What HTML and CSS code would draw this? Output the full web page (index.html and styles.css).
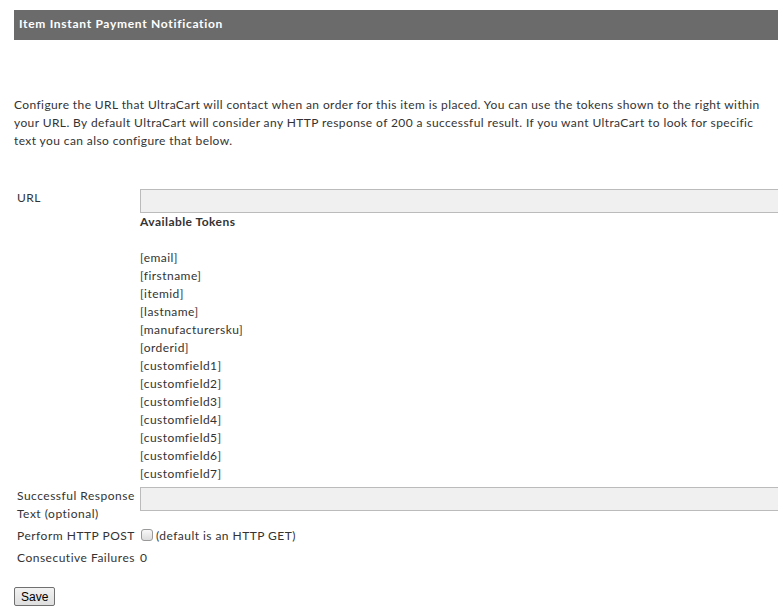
FILE: index.html
```html
<!DOCTYPE html>
<html lang="en">
<head>
    <meta charset="UTF-8">
    <title>Item Instant Payment Notification</title>
    <link rel="stylesheet" href="styles.css">
</head>
<body>
    <div class="panel">
        <div class="panel-header">Item Instant Payment Notification</div>
        <p class="intro">Configure the URL that UltraCart will contact when an order for this item is placed. You can use the tokens shown to the right within your URL. By default UltraCart will consider any HTTP response of 200 a successful result. If you want UltraCart to look for specific text you can also configure that below.</p>

        <div class="form">
            <label class="label" for="url">URL</label>
            <div class="field">
                <input class="text-input" id="url" type="text">
                <div class="tokens-title">Available Tokens</div>
                <ul class="tokens">
                    <li>[email]</li>
                    <li>[firstname]</li>
                    <li>[itemid]</li>
                    <li>[lastname]</li>
                    <li>[manufacturersku]</li>
                    <li>[orderid]</li>
                    <li>[customfield1]</li>
                    <li>[customfield2]</li>
                    <li>[customfield3]</li>
                    <li>[customfield4]</li>
                    <li>[customfield5]</li>
                    <li>[customfield6]</li>
                    <li>[customfield7]</li>
                </ul>
            </div>

            <label class="label" for="response">Successful Response Text (optional)</label>
            <div class="field">
                <input class="text-input" id="response" type="text">
            </div>

            <label class="label" for="post">Perform HTTP POST</label>
            <div class="field check-field">
                <input class="check" id="post" type="checkbox">
                <span>(default is an HTTP GET)</span>
            </div>

            <div class="label">Consecutive Failures</div>
            <div class="field">0</div>
        </div>

        <button class="save">Save</button>
    </div>
</body>
</html>
```

FILE: styles.css
```css
html, body {
    overflow: hidden;
}
body {
    margin: 10px 0 0 14px;
    font-family: Lato, "Open Sans", sans-serif;
    font-size: 12px;
    line-height: 18px;
    letter-spacing: 0.45px;
    color: #333;
    background: #fff;
}
.panel-header {
    height: 30px;
    line-height: 28px;
    padding-left: 5px;
    background-color: #6b6b6b;
    color: #fff;
    font-weight: bold;
    letter-spacing: 0.7px;
}
.intro {
    margin: 56px 0 0 0;
    padding-right: 6px;
    letter-spacing: 0.4px;
}
.form {
    display: grid;
    grid-template-columns: 126px 1fr;
    row-gap: 4px;
    margin-top: 39px;
}
.label {
    padding-left: 3px;
    padding-right: 2px;
    letter-spacing: 0.5px;
}
.field {
    min-width: 0;
}
.text-input {
    display: block;
    box-sizing: border-box;
    width: calc(100% + 4px);
    height: 24px;
    margin: 0;
    padding: 2px 4px;
    border: 1px solid #bbb;
    background-color: #f0f0f0;
    font: inherit;
}
.tokens-title {
    font-weight: bold;
}
.tokens {
    list-style: none;
    margin: 18px 0 0 0;
    padding: 0;
}
.check-field {
    display: flex;
    align-items: center;
    gap: 3px;
}
.check {
    appearance: none;
    width: 12px;
    height: 12px;
    margin: 0 0 0 1px;
    border: 1px solid #999;
    border-radius: 3px;
    background: linear-gradient(#f8f8f8, #dcdcdc);
    position: relative;
    top: -1px;
}
.save {
    margin-top: 20px;
    height: 19px;
    padding: 0 6px;
    font-family: "Liberation Sans", Arial, sans-serif;
    font-size: 12px;
    letter-spacing: 0;
    color: #000;
    border: 1px solid #707070;
    border-radius: 2px;
    background: linear-gradient(#f2f2f2, #dedede);
}
```
